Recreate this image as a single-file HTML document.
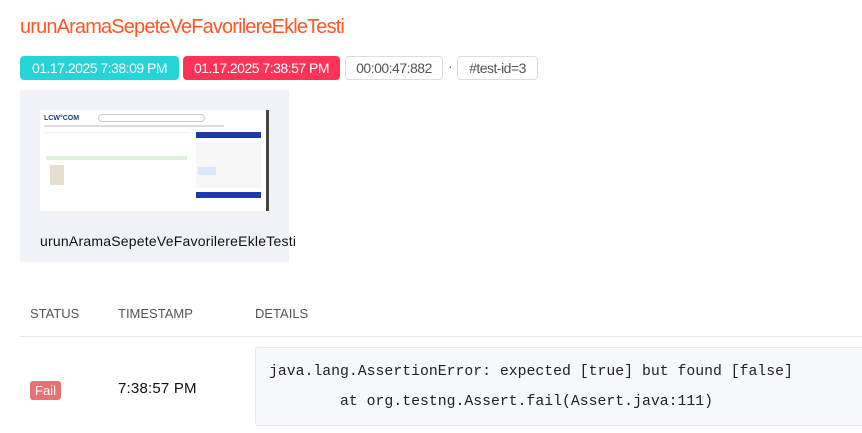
<!DOCTYPE html>
<html><head><style>
body{margin:0;width:862px;height:433px;overflow:hidden;background:#fff;font-family:"Liberation Sans",sans-serif;position:relative}
.a{position:absolute}
.t{left:20px;top:16px;font-size:20px;color:#ff5722;letter-spacing:-0.85px}
.b{top:56px;height:24px;line-height:24px;font-size:14px;border-radius:4px;text-align:center;box-sizing:border-box;letter-spacing:-0.5px}
</style></head><body>
<div class="a t">urunAramaSepeteVeFavorilereEkleTesti</div>
<div class="a b" style="left:20px;width:159px;background:#26d4d8;color:#fff">01.17.2025 7:38:09 PM</div>
<div class="a b" style="left:183px;width:157px;background:#ff3358;color:#fff">01.17.2025 7:38:57 PM</div>
<div class="a b" style="left:345px;width:98px;border:1px solid #ddd;color:#555;line-height:22px">00:00:47:882</div>
<div class="a" style="left:448px;top:58px;font-size:14px;color:#555">·</div>
<div class="a b" style="left:457px;width:81px;border:1px solid #ddd;color:#555;line-height:22px">#test-id=3</div>
<div class="a" style="left:20px;top:90px;width:269px;height:172px;background:#f0f2f7"></div>
<div class="a" style="left:40px;top:110px;width:229px;height:101px;background:#fff">
 <div class="a" style="left:4px;top:5px;font-size:7px;font-weight:bold;color:#1e3a8a">LCW°COM</div>
 <div class="a" style="left:58px;top:4px;width:105px;height:6px;border:1px solid #ccc;border-radius:4px"></div>
 <div class="a" style="left:4px;top:15px;width:180px;height:2px;background:#ddd"></div>
 <div class="a" style="left:4px;top:22px;width:145px;height:80px;border-top:1px solid #eee"></div>
 <div class="a" style="left:6px;top:46px;width:141px;height:4px;background:#dfeedd"></div>
 <div class="a" style="left:10px;top:55px;width:14px;height:20px;background:#e6ded0"></div>
 <div class="a" style="left:156px;top:22px;width:65px;height:6px;background:#1f3aa8"></div>
 <div class="a" style="left:156px;top:82px;width:65px;height:6px;background:#1f3aa8"></div>
 <div class="a" style="left:156px;top:32px;width:65px;height:46px;background:#f7f7f7"></div>
 <div class="a" style="left:158px;top:57px;width:18px;height:8px;background:#dbe7ff"></div>
 <div class="a" style="left:226px;top:0;width:3px;height:101px;background:#444"></div>
</div>
<div class="a" style="left:40px;top:233px;font-size:14px;color:#111;letter-spacing:0.22px">urunAramaSepeteVeFavorilereEkleTesti</div>
<div class="a" style="left:30px;top:306px;font-size:13px;color:#555">STATUS</div>
<div class="a" style="left:118px;top:306px;font-size:13px;color:#555">TIMESTAMP</div>
<div class="a" style="left:255px;top:306px;font-size:13px;color:#555">DETAILS</div>
<div class="a" style="left:20px;top:336px;width:842px;height:1px;background:#e6e6e6"></div>
<div class="a" style="left:30px;top:381px;width:31px;height:19px;background:#e57373;border-radius:3px;color:#fff;font-size:13px;text-align:center;line-height:19px">Fail</div>
<div class="a" style="left:118px;top:380px;font-size:15px;color:#111;letter-spacing:0.2px">7:38:57 PM</div>
<div class="a" style="left:255px;top:347px;width:620px;height:77px;background:#f6f8fa;border:1px solid #e5e7ea;border-radius:3px"></div>
<div class="a" style="left:269px;top:357px;font-family:'Liberation Mono',monospace;font-size:14.8px;color:#222;line-height:30px;white-space:pre">java.lang.AssertionError: expected [true] but found [false]
        at org.testng.Assert.fail(Assert.java:111)</div>
</body></html>
